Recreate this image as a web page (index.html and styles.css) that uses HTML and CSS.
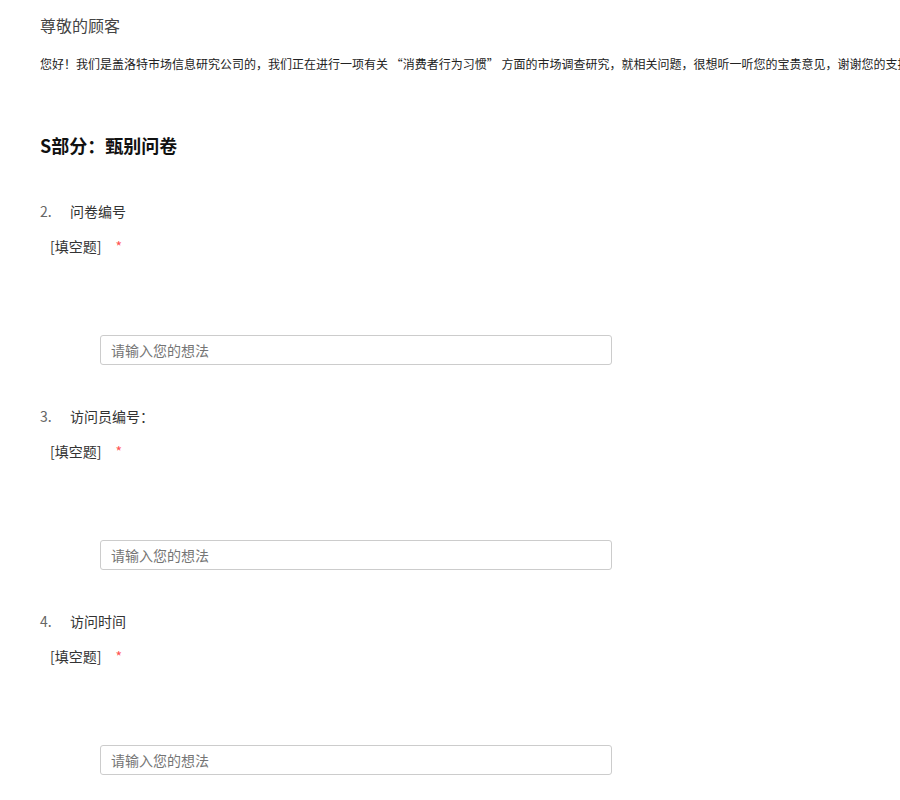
FILE: index.html
```html
<!DOCTYPE html>
<html lang="zh-CN">
<head>
    <meta charset="UTF-8">
    <meta name="viewport" content="width=device-width, initial-scale=1.0">
    <title>消费者行为习惯调查</title>
    <link rel="stylesheet" href="styles.css">
</head>
<body>
    <div class="survey">
        <p class="greeting">尊敬的顾客</p>
        <p class="intro">您好！我们是盖洛特市场信息研究公司的，我们正在进行一项有关 “消费者行为习惯” 方面的市场调查研究，就相关问题，很想听一听您的宝贵意见，谢谢您的支持！</p>

        <h2 class="section-title">S部分：甄别问卷</h2>

        <div class="question">
            <div class="question-title"><span class="num">2.</span>问卷编号</div>
            <div class="question-type">[填空题]<span class="required">*</span></div>
            <input type="text" class="answer" placeholder="请输入您的想法">
        </div>

        <div class="question">
            <div class="question-title"><span class="num">3.</span>访问员编号：</div>
            <div class="question-type">[填空题]<span class="required">*</span></div>
            <input type="text" class="answer" placeholder="请输入您的想法">
        </div>

        <div class="question">
            <div class="question-title"><span class="num">4.</span>访问时间</div>
            <div class="question-type">[填空题]<span class="required">*</span></div>
            <input type="text" class="answer" placeholder="请输入您的想法">
        </div>
    </div>
</body>
</html>
```

FILE: styles.css
```css
body {
    margin: 0;
    font-family: "Noto Sans CJK SC", "Noto Sans", sans-serif;
    color: #333;
    background-color: #fff;
    overflow: hidden;
}
.survey {
    padding-left: 40px;
}
.greeting {
    margin: 15px 0 0;
    font-size: 16px;
    line-height: 20px;
    color: #444;
}
.intro {
    margin: 19px 0 0;
    font-size: 12px;
    line-height: 20px;
    color: #222;
    white-space: nowrap;
}
.section-title {
    margin: 59px 0 0;
    font-size: 18px;
    line-height: 24px;
    font-weight: bold;
    color: #111;
}
.question {
    display: flex;
    flex-direction: column;
    align-items: flex-start;
    margin-top: 44px;
}
.question + .question {
    margin-top: 41px;
}
.question-title {
    font-size: 14px;
    line-height: 20px;
    color: #333;
}
.num {
    display: inline-block;
    width: 30px;
    color: #666;
}
.question-type {
    margin: 15px 0 0 10px;
    font-size: 14px;
    line-height: 20px;
    color: #333;
}
.required {
    margin-left: 14px;
    color: #f55;
}
.answer {
    margin: 79px 0 0 60px;
    width: 512px;
    height: 30px;
    box-sizing: border-box;
    padding: 0 10px;
    border: 1px solid #ccc;
    border-radius: 3px;
    font-family: inherit;
    font-size: 14px;
    color: #333;
    outline: none;
}
.answer::placeholder {
    color: #757575;
}
```
